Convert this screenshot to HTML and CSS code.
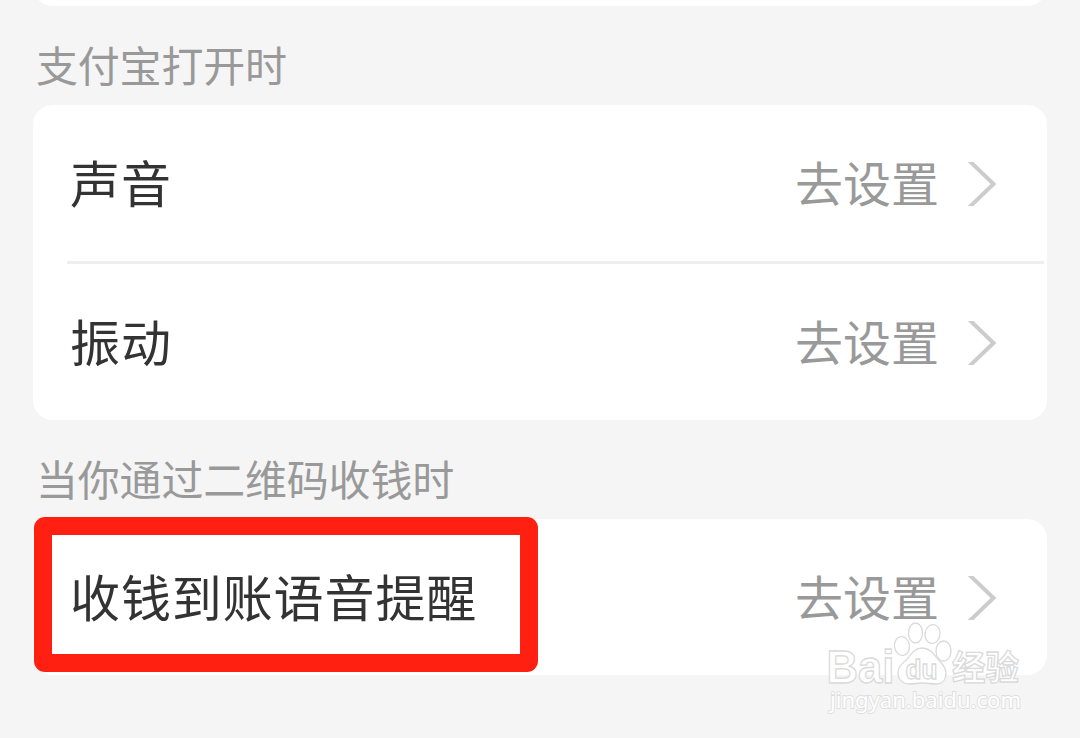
FILE: index.html
```html
<!doctype html>
<html lang="zh-CN">
<head>
  <title>支付宝</title>
  <meta charset="utf-8">
  <link rel="stylesheet" href="styles.css">
</head>
<body>

<div class="card previous"></div>

<h2>支付宝打开时</h2>
<div class="card">
  <div class="row">
    <span class="label">声音</span>
    <span class="action">去设置</span>
    <svg class="arrow" width="30" height="44" viewBox="0 0 30 44"><path d="M0.500 -2L25.500 22L0.500 46"/></svg>
  </div>
  <div class="line"></div>
  <div class="row">
    <span class="label">振动</span>
    <span class="action">去设置</span>
    <svg class="arrow" width="30" height="44" viewBox="0 0 30 44"><path d="M0.500 -2L25.500 22L0.500 46"/></svg>
  </div>
</div>

<h2>当你通过二维码收钱时</h2>
<div class="card">
  <div class="row">
    <span class="label">收钱到账语音提醒</span>
    <span class="action">去设置</span>
    <svg class="arrow" width="30" height="44" viewBox="0 0 30 44"><path d="M0.500 -2L25.500 22L0.500 46"/></svg>
  </div>
  <div class="mark"></div>
</div>

<svg class="watermark" width="230" height="128" viewBox="0 0 230 128">
  <g class="logo">
    <text class="bai" x="16.500" y="73" textLength="68" lengthAdjust="spacingAndGlyphs">Bai</text>
    <ellipse cx="92" cy="36" rx="7.5" ry="9.5" transform="rotate(-8 92 36)"/>
    <ellipse cx="105.500" cy="23" rx="7" ry="10"/>
    <ellipse cx="122.500" cy="24" rx="7.500" ry="9.500" transform="rotate(8 122.500 24)"/>
    <ellipse cx="133.500" cy="41" rx="7.500" ry="10"/>
    <path d="M112 38C105 38 102 43 98 48C94 53 88 55 88 63C88 70 93 74 99 74C104 74 107 73 112 73C117 73 121 74 126 74C132 74 136 70 136 63C136 56 131 53 127 48C123 43 119 38 112 38Z"/>
    <text class="du" x="95.500" y="69" textLength="32" lengthAdjust="spacingAndGlyphs">du</text>
    <text class="jingyan" x="142" y="70" textLength="67" lengthAdjust="spacingAndGlyphs">经验</text>
  </g>
  <text class="site" x="20" y="98" textLength="191" lengthAdjust="spacingAndGlyphs">jingyan.baidu.com</text>
</svg>

</body>
</html>
```

FILE: styles.css
```css
body {
  display: flow-root;
  margin: 0;
  height: 738px;
  overflow: hidden;
  background: #f5f5f5;
  font-family: "Noto Sans CJK SC", sans-serif;
}

.card {
  position: relative;
  margin: 0 33px;
  background: #fff;
  border-radius: 20px;
}

.previous {
  height: 40px;
  margin-top: -34px;
}

h2 {
  box-sizing: border-box;
  height: 99px;
  margin: 0;
  padding: 33px 0 0 36px;
  color: #999;
  font-size: 42px;
  font-weight: 400;
  line-height: 50px;
  letter-spacing: -0.2px;
}

.row {
  display: flex;
  align-items: center;
  height: 156px;
  padding: 0 49px 0 36px;
}

.label {
  flex: 1;
  padding: 0 0 5px 1px;
  color: #333;
  font-size: 50px;
  line-height: 60px;
  letter-spacing: 0.9px;
}

.action {
  margin-right: 29px;
  padding-bottom: 4px;
  color: #999;
  font-size: 48px;
  line-height: 60px;
}

.arrow {
  margin-top: 2px;
}

.arrow path {
  fill: none;
  stroke: #ccc;
  stroke-width: 4;
}

.line {
  height: 3px;
  margin: 0 3px 0 34px;
  background: #eee;
}

.mark {
  position: absolute;
  top: -2px;
  left: 0.5px;
  box-sizing: border-box;
  width: 504px;
  height: 155px;
  border: 18px solid #ff2012;
  border-radius: 11px;
}

.watermark {
  position: absolute;
  top: 610px;
  left: 810px;
}

.logo {
  fill: #fff;
  stroke: #dadada;
  stroke-width: 1.3;
}

.bai, .du {
  font-family: "Liberation Sans", sans-serif;
}

.bai {
  font-size: 46px;
  font-weight: 700;
}

.du {
  font-size: 27px;
  font-weight: 700;
}

.jingyan {
  font-size: 34px;
  font-weight: 700;
}

.site {
  fill: #fff;
  stroke: #dedede;
  stroke-width: 1.8;
  paint-order: stroke;
  font-family: "Noto Sans", sans-serif;
  font-size: 22px;
}
```
